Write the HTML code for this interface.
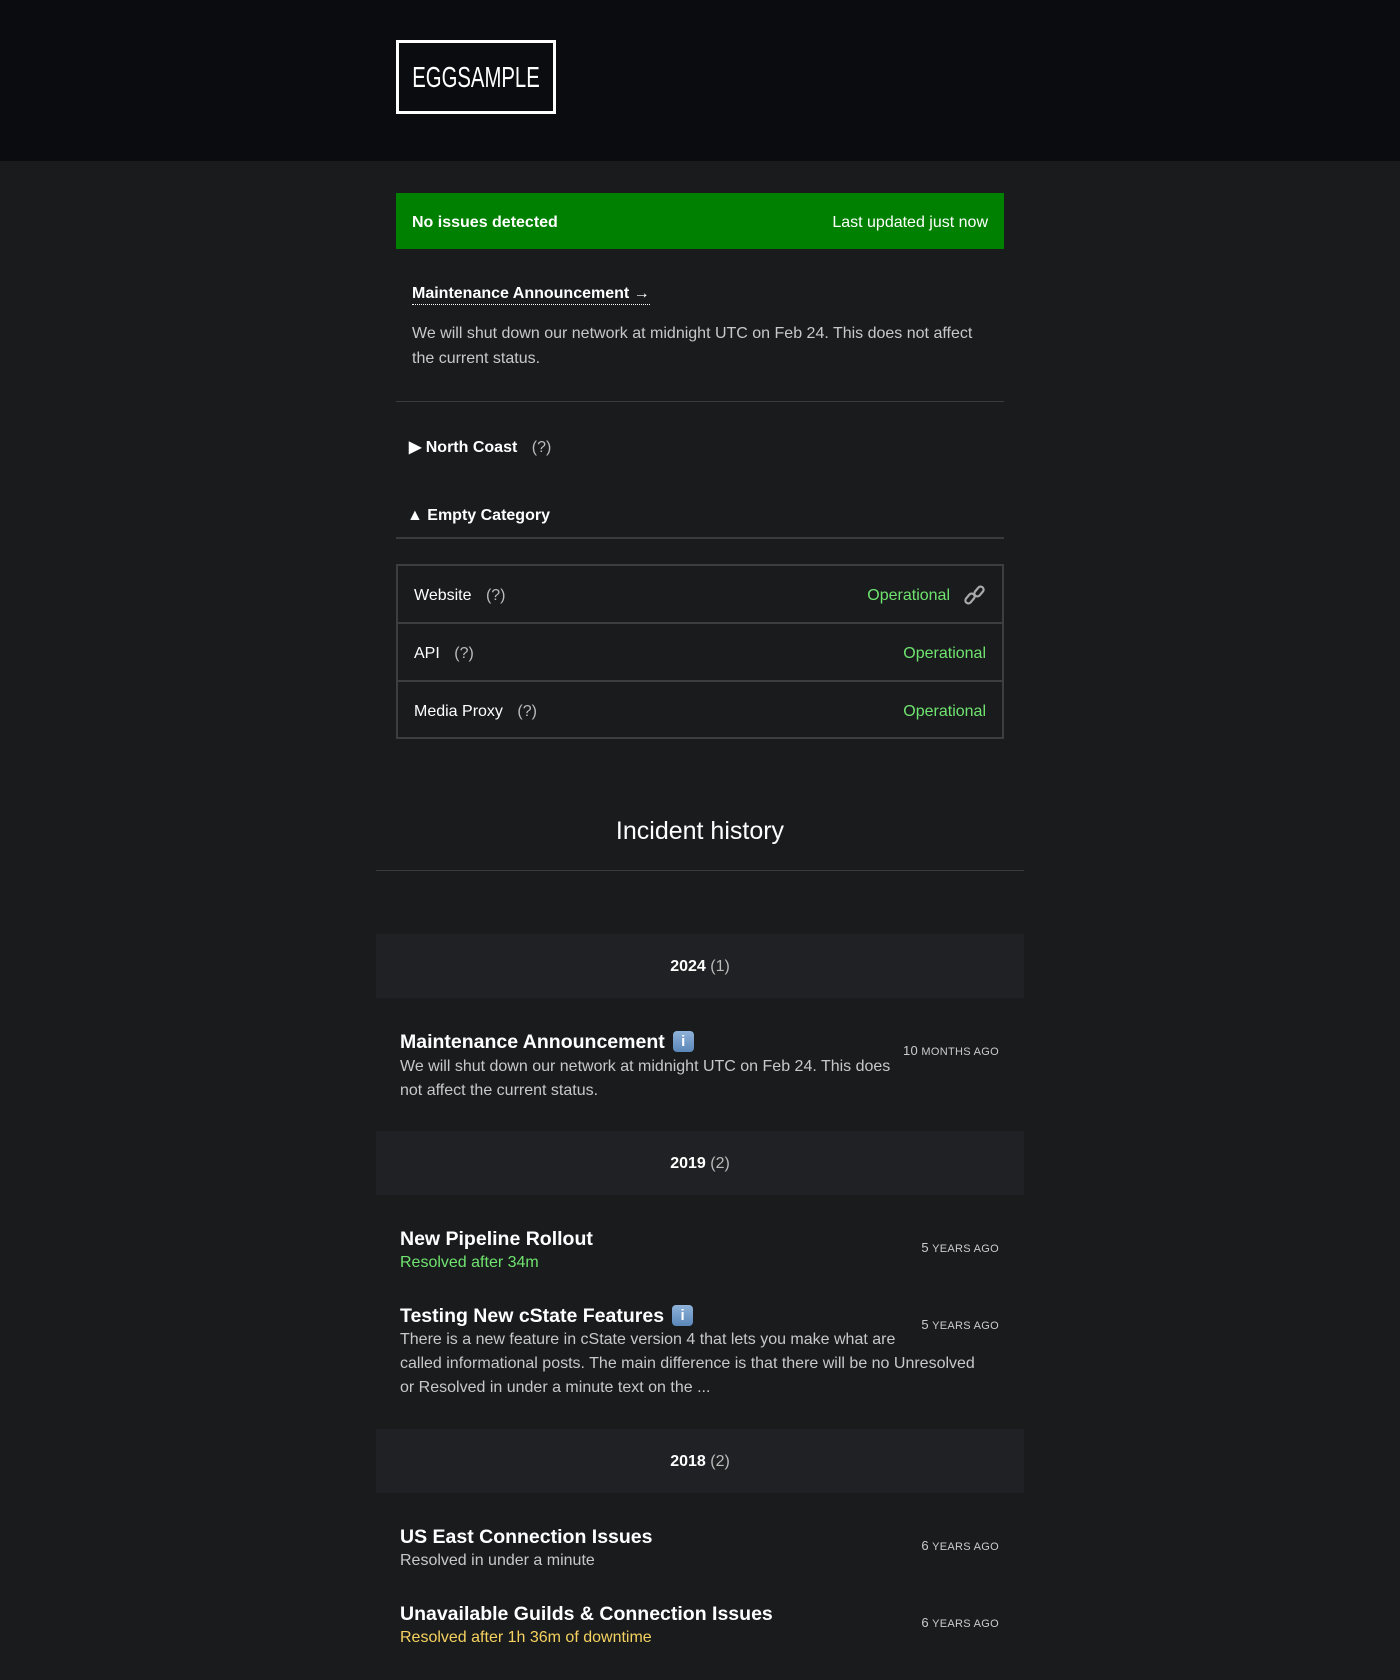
<!DOCTYPE html>
<html><head><meta charset="utf-8"><style>
*{margin:0;padding:0;box-sizing:border-box}
body{width:1400px;height:1680px;background:#1a1b1d;font-family:"Liberation Sans",sans-serif;color:#fff;position:relative;overflow:hidden}
.a{position:absolute;white-space:nowrap;line-height:24px}
.hd{position:absolute;left:0;top:0;width:1400px;height:161px;background:#0b0c10}
.logo{position:absolute;left:396px;top:40px;width:160px;height:74px;border:3px solid #fff}
.logo span{position:absolute;left:-40px;right:-40px;top:19px;text-align:center;font-size:29px;line-height:32px;transform:scaleX(.7);transform-origin:center}
.green{position:absolute;left:396px;top:193px;width:608px;height:56px;background:#008000;font-size:16px;font-weight:bold}
.hr{position:absolute;background:#3a3b3d}
.tbl{position:absolute;left:396px;top:564px;width:608px;height:175px;border:2px solid #3d3e40}
.row{position:absolute;left:0;width:604px;height:58px;border-bottom:2px solid #3d3e40;font-size:16px}
.q{color:#bbb}
.op{color:#6fe46f}
.band{position:absolute;left:376px;width:648px;height:64px;background:#202124;text-align:center;line-height:66px;font-size:16px}
.tt{font-size:19.5px;font-weight:bold}
.d{font-size:16px;color:#c8c8c8}
.dt{font-size:11px;color:#ccc;letter-spacing:.3px}
.dt b{font-size:13px;font-weight:normal}
.info{display:inline-block;width:21px;height:21px;border-radius:4px;background:linear-gradient(#8fb3d9,#5a86b8);color:#fff;font-size:15px;line-height:21px;text-align:center;vertical-align:2px;margin-left:8px;font-weight:bold}
</style></head><body>
<div class="hd"><div class="logo"><span>EGGSAMPLE</span></div></div>
<div class="green"><span class="a" style="left:16px;top:18px">No issues detected</span><span class="a" style="right:16px;top:18px;font-weight:normal">Last updated just now</span></div>
<div class="a" style="left:412px;top:284px;font-size:16px;font-weight:bold;border-bottom:1px dotted #fff;line-height:20px">Maintenance Announcement →</div>
<div class="a" style="left:412px;top:322px;font-size:16px;color:#c8c8c8;white-space:normal;width:580px;line-height:24.5px">We will shut down our network at midnight UTC on Feb 24. This does not affect the current status.</div>
<div class="hr" style="left:396px;top:401px;width:608px;height:1px"></div>
<div class="a" style="left:409px;top:436px;font-size:16px;font-weight:bold">▶ North Coast <span class="q" style="font-weight:normal;margin-left:10px">(?)</span></div>
<div class="a" style="left:407px;top:504px;font-size:16px;font-weight:bold">▲ Empty Category</div>
<div class="hr" style="left:396px;top:537px;width:608px;height:2px"></div>
<div class="tbl">
<div class="row" style="top:0"><span class="a" style="left:16px;top:18px">Website <span class="q" style="margin-left:10px">(?)</span></span><span class="a op" style="right:52px;top:18px">Operational</span>
<svg style="position:absolute;right:16px;top:18px" width="22" height="22" viewBox="0 0 22 22"><g fill="none" stroke="#aaa" stroke-width="2.2"><rect x="3" y="9" width="6" height="11" rx="3" transform="rotate(40 6 14.5)"/><rect x="12" y="2" width="6" height="11" rx="3" transform="rotate(40 15 7.5)"/></g></svg></div>
<div class="row" style="top:58px"><span class="a" style="left:16px;top:18px">API <span class="q" style="margin-left:10px">(?)</span></span><span class="a op" style="right:16px;top:18px">Operational</span></div>
<div class="row" style="top:116px;border-bottom:none"><span class="a" style="left:16px;top:18px">Media Proxy <span class="q" style="margin-left:10px">(?)</span></span><span class="a op" style="right:16px;top:18px">Operational</span></div>
</div>
<div class="a" style="left:0;width:1400px;text-align:center;top:815px;font-size:25px;line-height:32px">Incident history</div>
<div class="hr" style="left:376px;top:870px;width:648px;height:1px"></div>

<div class="band" style="top:934px"><b>2024</b> <span class="q">(1)</span></div>
<div class="a tt" style="left:400px;top:1030px">Maintenance Announcement<span class="info">i</span></div>
<div class="a d" style="left:400px;top:1055px;white-space:normal;width:510px;line-height:24px">We will shut down our network at midnight UTC on Feb 24. This does not affect the current status.</div>
<div class="a dt" style="right:401px;top:1039px"><b>10</b> MONTHS AGO</div>

<div class="band" style="top:1131px"><b>2019</b> <span class="q">(2)</span></div>
<div class="a tt" style="left:400px;top:1227px">New Pipeline Rollout</div>
<div class="a d" style="left:400px;top:1251px;color:#6fe46f">Resolved after 34m</div>
<div class="a dt" style="right:401px;top:1236px"><b>5</b> YEARS AGO</div>
<div class="a tt" style="left:400px;top:1304px">Testing New cState Features<span class="info">i</span></div>
<div class="a d" style="left:400px;top:1328px;white-space:normal;width:620px;line-height:24px">There is a new feature in cState version 4 that lets you make what are<br>called informational posts. The main difference is that there will be no Unresolved<br>or Resolved in under a minute text on the ...</div>
<div class="a dt" style="right:401px;top:1313px"><b>5</b> YEARS AGO</div>

<div class="band" style="top:1429px"><b>2018</b> <span class="q">(2)</span></div>
<div class="a tt" style="left:400px;top:1525px">US East Connection Issues</div>
<div class="a d" style="left:400px;top:1549px">Resolved in under a minute</div>
<div class="a dt" style="right:401px;top:1534px"><b>6</b> YEARS AGO</div>
<div class="a tt" style="left:400px;top:1602px">Unavailable Guilds &amp; Connection Issues</div>
<div class="a d" style="left:400px;top:1626px;color:#f5d25f">Resolved after 1h 36m of downtime</div>
<div class="a dt" style="right:401px;top:1611px"><b>6</b> YEARS AGO</div>
</body></html>
